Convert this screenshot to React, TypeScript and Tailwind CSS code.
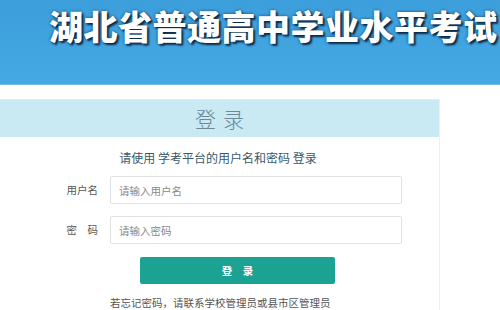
export default function App() {
  return (
    <div
      className="w-[500px] h-[310px] overflow-hidden bg-white"
      style={{ fontFamily: '"Noto Sans CJK SC", "Noto Sans", sans-serif' }}
    >
      {/* banner */}
      <div className="h-[85px] border-b border-[#7fb6dc] bg-gradient-to-b from-[#3c9fdc] to-[#45a9e3] pl-[49px] pt-[4px]">
        <h1 className="whitespace-nowrap text-[34px] leading-[44px] font-black text-white tracking-[0.5px] [text-shadow:2px_2px_2px_#0d2a4a,0_0_3px_#1b3f66]">
          湖北省普通高中学业水平考试
        </h1>
      </div>

      <div className="pt-[14px]">
        <div className="w-[440px] border-r border-[#e3f1f8]">
          <div className="h-[38px] bg-[#c9e9f3] border-t border-[#d6eef6] flex items-center justify-center">
            <span className="text-[21px] font-light text-[#6a8898] tracking-[7px] pl-[7px]">
              登录
            </span>
          </div>

          <div className="pt-[13px] pb-[10px]">
            <p className="text-center text-[12px] leading-[16px] text-[#3a5868] pr-[3px]">
              请使用&nbsp;学考平台的用户名和密码&nbsp;登录
            </p>

            <div className="mt-[10px] flex flex-col gap-[12px]">
              <div className="flex items-center">
                <label className="w-[98px] text-right text-[10.5px] text-[#555]">
                  用户名
                </label>
                <input
                  className="ml-[12px] w-[292px] h-[28px] rounded-[2px] border border-[#e2e2e2] px-[8px] text-[10.5px] outline-none placeholder:text-[#888]"
                  placeholder="请输入用户名"
                />
              </div>
              <div className="flex items-center">
                <label className="w-[98px] text-right text-[10.5px] text-[#555]">
                  密　码
                </label>
                <input
                  type="password"
                  className="ml-[12px] w-[292px] h-[28px] rounded-[2px] border border-[#e2e2e2] px-[8px] text-[10.5px] outline-none placeholder:text-[#888]"
                  placeholder="请输入密码"
                />
              </div>
            </div>

            <button className="mt-[13px] ml-[140px] w-[195px] h-[27px] rounded-[2px] bg-[#1ba293] text-white text-[10.5px] font-bold">
              登　录
            </button>

            <p className="mt-[12px] ml-[110px] text-[10.5px] leading-[14px] text-[#555] whitespace-nowrap">
              若忘记密码，请联系学校管理员或县市区管理员
            </p>
          </div>
        </div>
      </div>
    </div>
  );
}
